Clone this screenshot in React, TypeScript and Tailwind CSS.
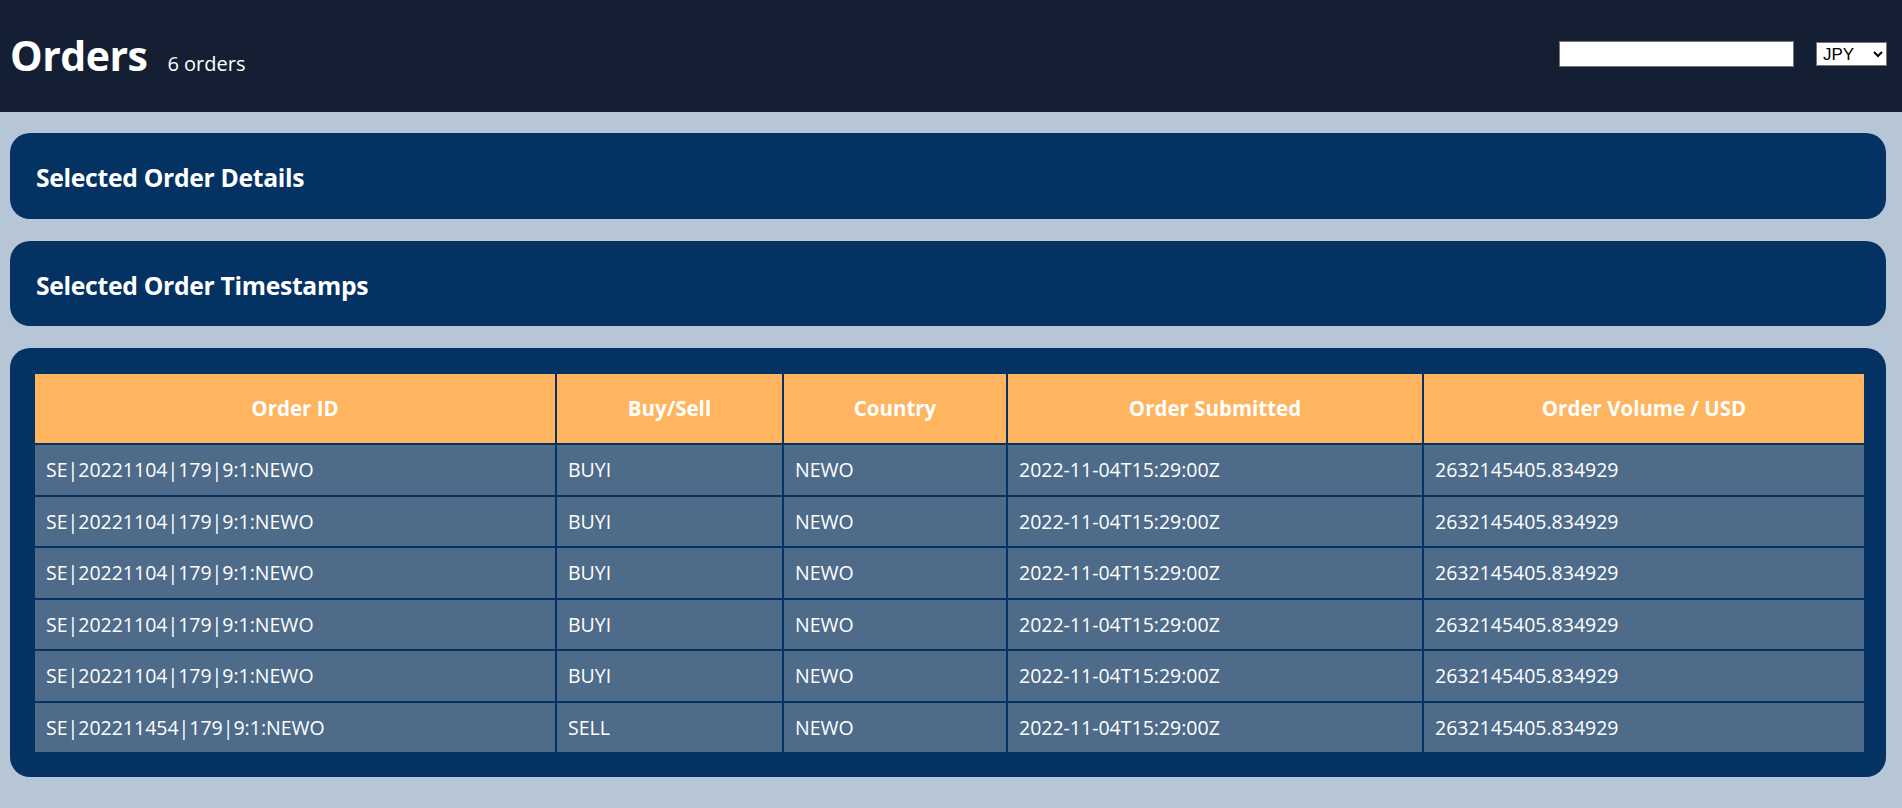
import React from "react";

const rows = [
  ["SE|20221104|179|9:1:NEWO", "BUYI", "NEWO", "2022-11-04T15:29:00Z", "2632145405.834929"],
  ["SE|20221104|179|9:1:NEWO", "BUYI", "NEWO", "2022-11-04T15:29:00Z", "2632145405.834929"],
  ["SE|20221104|179|9:1:NEWO", "BUYI", "NEWO", "2022-11-04T15:29:00Z", "2632145405.834929"],
  ["SE|20221104|179|9:1:NEWO", "BUYI", "NEWO", "2022-11-04T15:29:00Z", "2632145405.834929"],
  ["SE|20221104|179|9:1:NEWO", "BUYI", "NEWO", "2022-11-04T15:29:00Z", "2632145405.834929"],
  ["SE|202211454|179|9:1:NEWO", "SELL", "NEWO", "2022-11-04T15:29:00Z", "2632145405.834929"],
];

const headers = ["Order ID", "Buy/Sell", "Country", "Order Submitted", "Order Volume / USD"];
const widths = ["w-[522px]", "w-[227px]", "w-[224px]", "w-[416px]", "w-[442px]"];

export default function App() {
  return (
    <div className="min-h-[808px] bg-[#b6c6d6] font-['Open_Sans','Noto_Sans',sans-serif] text-white">
      <header className="h-[112px] bg-[#141f33] flex items-center justify-between pl-[10px] pr-[15px]">
        <div className="flex items-baseline gap-[20px] mt-[2px]">
          <h1 className="text-[41px] font-bold leading-none tracking-[-0.5px]">Orders</h1>
          <span className="text-[20px]">6 orders</span>
        </div>
        <div className="flex items-center gap-[22px] mb-[4px]">
          <input className="w-[235px] h-[26px] bg-white border border-[#767676] text-black text-[13px] px-1" />
          <select className="w-[71px] h-[24px] bg-white border border-[#767676] text-black text-[17px] font-['Liberation_Sans',Arial,sans-serif] pl-[2px]">
            <option>JPY</option>
            <option>USD</option>
            <option>EUR</option>
          </select>
        </div>
      </header>
      <main className="flex flex-col gap-[22px] pt-[21px] pl-[10px] pr-[16px]">
        <section className="h-[86px] rounded-[20px] bg-[#043263] flex items-center px-[26px] pt-[4px]">
          <h3 className="text-[24.7px] font-bold tracking-[-0.3px]">Selected Order Details</h3>
        </section>
        <section className="h-[85px] rounded-[20px] bg-[#043263] flex items-center px-[26px] pt-[4px]">
          <h3 className="text-[24.7px] font-bold tracking-[-0.3px]">Selected Order Timestamps</h3>
        </section>
        <section className="rounded-[20px] bg-[#043263] pt-[24px] pb-[23px] pl-[23px] pr-[22px]">
          <table className="w-[1831px] table-fixed border-collapse text-[19.5px]">
            <thead>
              <tr className="h-[71px] bg-[#ffb55f]">
                {headers.map((h, i) => (
                  <th key={i} className={`${widths[i]} border-2 border-[#043263] text-center font-bold text-[20.5px]`}>
                    {h}
                  </th>
                ))}
              </tr>
            </thead>
            <tbody>
              {rows.map((r, ri) => (
                <tr key={ri} className="h-[51.5px] bg-[#4e6b8a]">
                  {r.map((c, ci) => (
                    <td key={ci} className="border-2 border-[#043263] pl-[11px] text-left font-normal">
                      {c}
                    </td>
                  ))}
                </tr>
              ))}
            </tbody>
          </table>
        </section>
      </main>
    </div>
  );
}
